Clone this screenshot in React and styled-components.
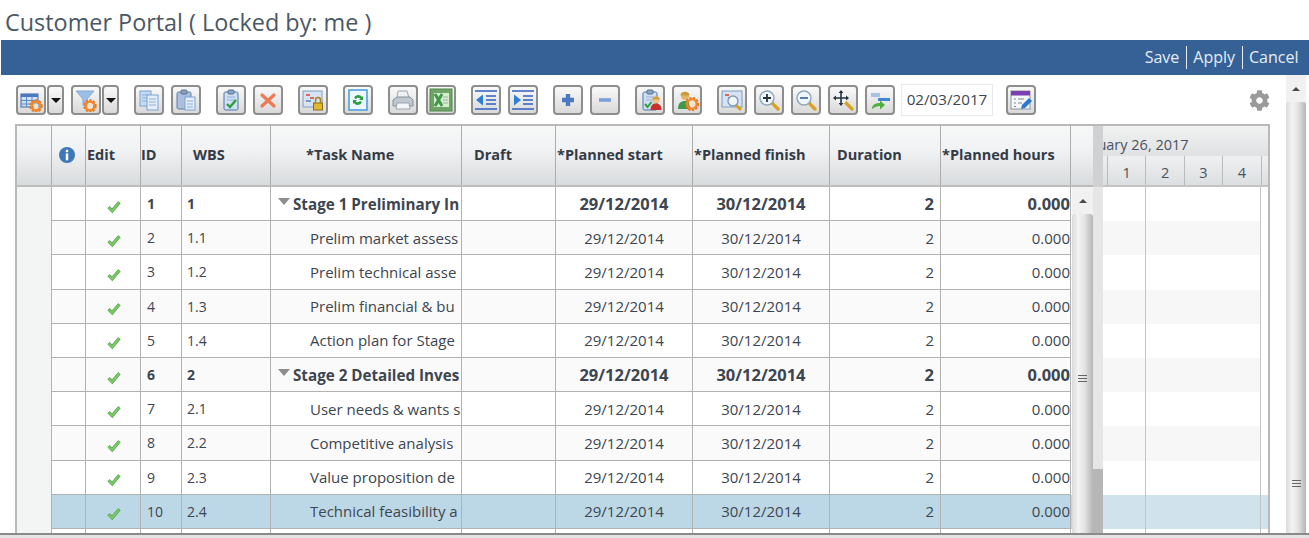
import React from "react";
import styled, { createGlobalStyle } from "styled-components";
import { FaCog } from "react-icons/fa";

const GlobalStyle = createGlobalStyle`
  html, body {
    margin: 0;
    padding: 0;
    background: #fff;
    overflow: hidden;
  }
  body {
    font-family: "Open Sans", "Noto Sans", "Liberation Sans", sans-serif;
    color: #3d4650;
  }
`;

const columns = "35px 34px 55px 41px 89px 191px 94px 137px 137px 111px 130px";

const rows = [
  { id: 1, wbs: "1", name: "Stage 1 Preliminary In", bold: true },
  { id: 2, wbs: "1.1", name: "Prelim market assess" },
  { id: 3, wbs: "1.2", name: "Prelim technical asse" },
  { id: 4, wbs: "1.3", name: "Prelim financial & bu" },
  { id: 5, wbs: "1.4", name: "Action plan for Stage" },
  { id: 6, wbs: "2", name: "Stage 2 Detailed Inves", bold: true },
  { id: 7, wbs: "2.1", name: "User needs & wants s" },
  { id: 8, wbs: "2.2", name: "Competitive analysis" },
  { id: 9, wbs: "2.3", name: "Value proposition de" },
  { id: 10, wbs: "2.4", name: "Technical feasibility a", selected: true },
];

const Svg = ({ children, size = 24 }) => (
  <svg width={size} height={size} viewBox="0 0 24 24">
    {children}
  </svg>
);

const Gear = ({ x, y, r = 5 }) => (
  <g>
    <circle cx={x} cy={y} r={r} fill="none" stroke="#e8711c" strokeWidth="3.4" strokeDasharray="2 1.2" />
    <circle cx={x} cy={y} r={r - 0.6} fill="none" stroke="#ef8a2e" strokeWidth="2.2" />
    <circle cx={x} cy={y} r={r - 2.6} fill="#f9e3c4" />
  </g>
);

const Sheet = ({ x, y, w = 11, h = 14, fill = "#dbe8f7" }) => (
  <g>
    <rect x={x} y={y} width={w} height={h} fill={fill} stroke="#7fa2cf" />
    <path d={`M${x + 2} ${y + 4}h${w - 4}M${x + 2} ${y + 7}h${w - 4}M${x + 2} ${y + 10}h${w - 4}`} stroke="#8fb0d8" />
  </g>
);

const Board = () => (
  <g>
    <rect x="5" y="4" width="14" height="18" rx="1.5" fill="#cfe0f3" stroke="#4f74a8" />
    <rect x="9" y="2" width="6" height="4" rx="1" fill="#8da6c6" stroke="#56708f" />
    <path d="M8 9h8M8 12h8" stroke="#8fb0d8" />
  </g>
);

const Lens = ({ children }) => (
  <g>
    <path d="M14 14l7 7" stroke="#d9a320" strokeWidth="3.4" strokeLinecap="round" />
    <circle cx="10" cy="10" r="7" fill="#eef5fb" stroke="#8fa5b8" strokeWidth="1.4" />
    {children}
  </g>
);

const Person = ({ x = 0, shirt = "#c8322a" }) => (
  <g transform={`translate(${x} 0)`}>
    <circle cx="16" cy="12" r="3.6" fill="#f2c28a" />
    <path d="M12 11.500c0-4 8-4 8 0z" fill="#d2a13c" />
    <path d="M10.500 22c0-5 2.500-6.500 5.500-6.500s5.500 1.500 5.500 6.500z" fill={shirt} />
  </g>
);

const icons = {
  tableGear: (
    <Svg>
      <rect x="2" y="6" width="17" height="13" fill="#cfe0f6" stroke="#3d69ab" />
      <rect x="2" y="6" width="17" height="3" fill="#4a78bd" />
      <path d="M2 12.500h17M2 16h17M7.500 9v10M13 9v10" stroke="#5f88c4" />
      <Gear x={17} y={18} />
    </Svg>
  ),
  filterGear: (
    <Svg>
      <path d="M2 3h18l-7 8v8l-4-2v-6z" fill="#9cbfe8" stroke="#86a9d6" />
      <Gear x={16} y={18} />
    </Svg>
  ),
  copy: (
    <Svg>
      <Sheet x={3} y={3} h={15} fill="#c5daf3" />
      <Sheet x={10} y={7} h={15} fill="#e3eefa" />
    </Svg>
  ),
  paste: (
    <Svg>
      <rect x="3" y="4" width="14" height="17" rx="1.500" fill="#a9c1df" stroke="#5f7da6" />
      <rect x="7" y="2" width="6" height="4" rx="1" fill="#8a9fba" stroke="#5e7694" />
      <Sheet x={11} y={9} w={10} h={13} fill="#e3eefa" />
    </Svg>
  ),
  check: (
    <Svg>
      <Board />
      <path d="M8 16l3 3 6-7" fill="none" stroke="#2f9e3f" strokeWidth="2.400" />
    </Svg>
  ),
  remove: (
    <Svg>
      <path d="M6 7l12 11M18 7L6 18" stroke="#ec7a55" strokeWidth="3.200" strokeLinecap="round" />
    </Svg>
  ),
  lock: (
    <Svg>
      <rect x="2" y="3" width="19" height="16" fill="#d5e3f3" stroke="#7f9dc2" />
      <path d="M5 7h4M9 10h4" stroke="#d8402e" strokeWidth="1.600" />
      <path d="M5 13h5" stroke="#5f88c4" strokeWidth="1.600" />
      <rect x="12.500" y="15" width="9" height="7" fill="#e0b92c" stroke="#8a6c12" />
      <path d="M14.500 15v-3a2.500 2.500 0 0 1 5 0v3" fill="none" stroke="#a8861e" strokeWidth="1.600" />
    </Svg>
  ),
  refresh: (
    <Svg>
      <rect x="3" y="2" width="18" height="20" fill="#edf6fc" stroke="#4ba3dc" strokeWidth="1.600" />
      <path d="M8 10a4.500 4.500 0 0 1 8-1l1-1v4h-4l1.400-1.200A2.800 2.800 0 0 0 10 11z" fill="#2c9d47" />
      <path d="M16 14a4.500 4.500 0 0 1-8 1l-1 1v-4h4l-1.400 1.200A2.800 2.800 0 0 0 14 13z" fill="#2c9d47" />
    </Svg>
  ),
  print: (
    <Svg>
      <path d="M7 3h9l2 7H6z" fill="#eef1f4" stroke="#9aa6b2" />
      <path d="M2 12l4-3h13l3 3v6H2z" fill="#bec6ce" stroke="#87919b" />
      <path d="M6 15h12l1 6H5z" fill="#f3f5f7" stroke="#9aa6b2" />
    </Svg>
  ),
  excel: (
    <Svg>
      <rect x="1" y="1" width="22" height="22" fill="#6ea567" stroke="#4f8a4a" />
      <rect x="5" y="5" width="15" height="14" fill="#d9ecd3" />
      <path d="M6 6l7 12M13 6L6 18" stroke="#3f9a48" strokeWidth="3" />
      <path d="M14 9h5M14 12h5M14 15h5" stroke="#8ac087" />
    </Svg>
  ),
  outdent: (
    <Svg>
      <path d="M1 3h22M1 21h22M12 8h10M12 12h10M12 16h10" stroke="#2f5fc4" strokeWidth="1.600" />
      <path d="M2 12l7-5.500v11z" fill="#2e7fd6" />
    </Svg>
  ),
  indent: (
    <Svg>
      <path d="M1 3h22M1 21h22M12 8h10M12 12h10M12 16h10" stroke="#2f5fc4" strokeWidth="1.600" />
      <path d="M10 12L3 6.500v11z" fill="#2e7fd6" />
    </Svg>
  ),
  plus: (
    <Svg>
      <path d="M12 6v12M6 12h12" stroke="#4f78c4" strokeWidth="4.400" />
    </Svg>
  ),
  minus: (
    <Svg>
      <path d="M6 12h12" stroke="#7ba0da" strokeWidth="3.600" />
    </Svg>
  ),
  assign: (
    <Svg>
      <Board />
      <path d="M7 16l2.500 3 4-5" fill="none" stroke="#2f9e3f" strokeWidth="2" />
      <Person x={2} />
    </Svg>
  ),
  resource: (
    <Svg>
      <circle cx="10" cy="8" r="4" fill="#e2b667" />
      <path d="M5.500 7.500c0-5 9-5 9 0z" fill="#c99a3a" />
      <path d="M3 21c0-6 3-8 7-8s5 2 5 8z" fill="#3d9a4a" />
      <Gear x={17} y={16} r={5.400} />
    </Svg>
  ),
  preview: (
    <Svg>
      <rect x="2" y="3" width="20" height="16" fill="#d5e3f3" stroke="#7f9dc2" />
      <path d="M5 7h4M8 10h4" stroke="#d8402e" strokeWidth="1.600" />
      <path d="M16 17l5 5" stroke="#d9a320" strokeWidth="3" />
      <circle cx="13" cy="13" r="5" fill="#eef5fb" stroke="#7f9ab6" strokeWidth="1.400" />
    </Svg>
  ),
  zoomIn: (
    <Svg>
      <Lens>
        <path d="M6 10h8M10 6v8" stroke="#29313a" strokeWidth="1.800" />
      </Lens>
    </Svg>
  ),
  zoomOut: (
    <Svg>
      <Lens>
        <path d="M6 10h8" stroke="#4f6f9c" strokeWidth="1.800" />
      </Lens>
    </Svg>
  ),
  zoomFit: (
    <Svg>
      <path d="M14 14l7 7" stroke="#d9a320" strokeWidth="3.400" strokeLinecap="round" />
      <circle cx="10" cy="10" r="6" fill="#eef5fb" />
      <path d="M3 10h14M10 3v14" stroke="#29313a" strokeWidth="1.600" />
      <path d="M10 2l-2.400 3h4.800zM10 18l-2.400-3h4.800zM2 10l3-2.400v4.800zM18 10l-3-2.400v4.800z" fill="#29313a" />
    </Svg>
  ),
  gotoBar: (
    <Svg>
      <rect x="3" y="5" width="9" height="4" fill="#a9c3e4" />
      <rect x="10" y="10" width="12" height="3" fill="#3f86d6" />
      <path d="M4 21c0-4 3-6 8-6v-2.500l5 4.500-5 4.500V18c-3 0-5 1-8 3z" fill="#4fae3c" />
    </Svg>
  ),
  calendar: (
    <Svg>
      <rect x="2" y="3" width="19" height="18" fill="#f4f6f8" stroke="#8f96a0" />
      <rect x="2" y="3" width="19" height="4.500" fill="#7a3fb0" />
      <path d="M5 11h2M9 11h6M5 15h2M9 15h4M5 18.500h2" stroke="#7c8794" strokeWidth="1.200" />
      <path d="M12 21l1-4 7-7 3 3-7 7z" fill="#2a78d0" />
    </Svg>
  ),
};

const Page = styled.div`
  width: 1309px;
  height: 538px;
  display: flex;
  flex-direction: column;
  overflow: hidden;
`;

const Title = styled.h1`
  margin: 0;
  height: 40px;
  padding-left: 5px;
  font-size: 23.4px;
  font-weight: 400;
  line-height: 44px;
  color: #4a5866;
`;

const ActionBar = styled.div`
  height: 35px;
  margin-left: 1px;
  padding-right: 4px;
  display: flex;
  justify-content: flex-end;
  align-items: center;
  background: #356197;
  box-sizing: border-box;
`;

const ActionLink = styled.a`
  font-size: 16px;
  color: #e6edf5;
  padding: 0 6.5px;
  line-height: 23px;
  border-left: 1px solid ${(p) => (p.$first ? "transparent" : "#e6edf5")};
`;

const Workspace = styled.div`
  flex: 1;
  min-height: 0;
  display: flex;
`;

const Main = styled.div`
  width: 1286px;
  box-sizing: border-box;
  padding-left: 15px;
  padding-right: 16px;
  display: flex;
  flex-direction: column;
`;

const Toolbar = styled.div`
  height: 49px;
  flex-shrink: 0;
  display: flex;
  align-items: center;
  gap: 15px;
  padding-left: 1px;
  padding-top: 1px;
  box-sizing: border-box;
`;

const Group = styled.div`
  display: flex;
  gap: ${(p) => p.$gap ?? 7}px;
  margin-left: ${(p) => p.$shift ?? 0}px;
`;

const IconButton = styled.button`
  width: 30px;
  height: 30px;
  padding: 0;
  display: flex;
  align-items: center;
  justify-content: center;
  border: 2px solid #8e8e8e;
  border-radius: 4px;
  background: linear-gradient(#f9f9f9, #d9d9d9);
  box-sizing: border-box;
`;

const Caret = styled.button`
  width: 17px;
  height: 30px;
  padding: 0;
  display: flex;
  align-items: center;
  justify-content: center;
  border: 2px solid #8e8e8e;
  border-radius: 4px;
  background: linear-gradient(#f9f9f9, #d9d9d9);
  box-sizing: border-box;

  &::after {
    content: "";
    border-left: 5px solid transparent;
    border-right: 5px solid transparent;
    border-top: 5px solid #111;
  }
`;

const DateInput = styled.div`
  width: 92px;
  height: 32px;
  margin-left: -9px;
  margin-right: -2px;
  box-sizing: border-box;
  border: 1px solid #e6e9ee;
  font-size: 15.2px;
  line-height: 28px;
  text-align: center;
  color: #3d4650;
`;

const SettingsIcon = styled(FaCog)`
  margin-left: auto;
  font-size: 21px;
  color: #9a9a9a;
`;

const Panel = styled.div`
  flex: 1;
  min-height: 0;
  display: flex;
  border: 2px solid #b9b9b9;
  border-bottom: 0;
  overflow: hidden;
`;

const TablePane = styled.div`
  width: 1076px;
  flex-shrink: 0;
  display: flex;
  flex-direction: column;
`;

const HeaderRow = styled.div`
  height: 59px;
  flex-shrink: 0;
  display: grid;
  grid-template-columns: ${columns} 1fr;
  background: linear-gradient(#f6f7f7, #f1f2f3 40%, #d8dbdd);
  border-bottom: 2px solid #bcbcbc;
`;

const HeaderCell = styled.div`
  display: flex;
  align-items: center;
  justify-content: ${(p) => p.$align ?? "flex-start"};
  padding-left: ${(p) => p.$pad ?? 0}px;
  padding-bottom: 2px;
  font-size: 14.5px;
  font-weight: 700;
  color: #333b46;
  border-right: 1px solid #adadad;
  white-space: nowrap;
  overflow: hidden;

  &:last-child {
    border-right: 0;
  }
`;

const InfoSlot = styled.span`
  display: flex;
  margin-right: 10px;
`;

const BodyArea = styled.div`
  flex: 1;
  min-height: 0;
  display: flex;
`;

const Rows = styled.div`
  width: 1055px;
  flex-shrink: 0;
  overflow: hidden;
`;

const Row = styled.div`
  height: 34.2px;
  box-sizing: border-box;
  display: grid;
  grid-template-columns: ${columns};
  font-size: ${(p) => (p.$bold ? 16.5 : 15)}px;
  font-weight: ${(p) => (p.$bold ? 700 : 400)};
  background: ${(p) => (p.$selected ? "#bcd8e6" : p.$even ? "#fafafa" : "#fff")};
`;

const Cell = styled.div`
  display: flex;
  align-items: center;
  justify-content: ${(p) => p.$align ?? "flex-start"};
  padding: 0 ${(p) => p.$right ?? 0}px 0 ${(p) => p.$left ?? 0}px;
  font-size: ${(p) => (p.$size ? `${p.$size}px` : "inherit")};
  border-right: 1px solid #b2b2b2;
  border-bottom: 1px solid #b2b2b2;
  white-space: nowrap;
  overflow: hidden;
  min-width: 0;
  box-sizing: border-box;
`;

const MarkerCell = styled.div`
  background: #f3f4f4;
  border-right: 1px solid #b2b2b2;
`;

const ExpandArrow = styled.span`
  flex-shrink: 0;
  margin-right: 3px;
  border-left: 6.5px solid transparent;
  border-right: 6.5px solid transparent;
  border-top: 7px solid #8d8d8d;
  transform: translateY(-2px);
`;

const CheckMark = styled.svg`
  transform: translateY(3px);
`;

const ScrollTrack = styled.div`
  display: flex;
  flex-direction: column;
  width: ${(p) => p.$width ?? 20}px;
  flex-shrink: 0;
  background: #f1f1f1;
`;

const ScrollArrow = styled.div`
  height: ${(p) => p.$height}px;
  flex-shrink: 0;
  display: flex;
  align-items: center;
  justify-content: center;

  &::after {
    content: "";
    border-left: 4px solid transparent;
    border-right: 4px solid transparent;
    border-bottom: 4px solid #4a4a4a;
  }
`;

const ScrollThumb = styled.div`
  flex: 1;
  display: flex;
  align-items: flex-start;
  justify-content: center;
  padding-top: ${(p) => p.$gripTop}px;
  background: linear-gradient(90deg, #d9dadb, #f3f3f3 30%, #e3e3e3 60%, #b3b5b7);
  border-radius: 3px 3px 0 0;
  box-sizing: border-box;
`;

const Grip = styled.span`
  width: 9px;
  height: 8px;
  background: repeating-linear-gradient(#666 0 1px, transparent 1px 3px);
`;

const Splitter = styled.div`
  width: 10px;
  flex-shrink: 0;
  display: flex;
  flex-direction: column;
`;

const SplitterHead = styled.div`
  height: 61px;
  background: #cfd1d2;
`;

const SplitterTrack = styled.div`
  flex: 1;
  background: #e6e6e6;
`;

const SplitterThumb = styled.div`
  height: 64px;
  background: #b6b6b6;
`;

const GanttPane = styled.div`
  flex: 1;
  min-width: 0;
  display: flex;
  flex-direction: column;
  overflow: hidden;
`;

const GanttHead = styled.div`
  height: 59px;
  flex-shrink: 0;
  display: flex;
  flex-direction: column;
  border-bottom: 2px solid #c4c4c4;
  background: #e4e6e7;
`;

const GanttMonth = styled.div`
  height: 30px;
  flex-shrink: 0;
  overflow: hidden;
  white-space: nowrap;
  text-indent: -36px;
  font-size: 14.5px;
  line-height: 38px;
  color: #4a5360;
  background: linear-gradient(#f1f2f2, #dfe1e3);
`;

const GanttDays = styled.div`
  flex: 1;
  display: grid;
  grid-template-columns: 5px repeat(4, 38.4px) 1fr;
  background: linear-gradient(#eff0f1, #dcdfe1);
`;

const GanttDay = styled.div`
  display: flex;
  align-items: center;
  justify-content: center;
  padding-top: 3px;
  font-size: 14.5px;
  color: #4a5360;
  border-right: 1px solid #b9bcbf;

  &:last-child {
    border-right: 0;
  }
`;

const GanttBody = styled.div`
  flex: 1;
  min-height: 0;
  overflow: hidden;
`;

const GanttRow = styled.div`
  height: 34.2px;
  display: grid;
  grid-template-columns: 43px 115px;
  background: ${(p) => (p.$selected ? "#d0e2ec" : "#fff")};
`;

const GanttCell = styled.div`
  background: ${(p) => (p.$even ? "#f7f7f7" : "transparent")};
  border-right: 1px solid #c4c4c4;
`;

const Gutter = styled.div`
  flex: 1;
  background: #fff;
`;

const Footer = styled.div`
  height: 5px;
  flex-shrink: 0;
  background: #e4e4e4;
  border-top: 2px solid #8a8a8a;
  box-sizing: border-box;
`;

const Check = () => (
  <CheckMark width="14" height="14" viewBox="0 0 17 16">
    <path d="M1 9.500l2.500-2 2.500 3L13.500 1.500 16 3.500 6.500 15z" fill="#7ccb66" stroke="#4a9f44" strokeWidth="1" />
  </CheckMark>
);

const InfoIcon = () => (
  <svg width="16" height="16" viewBox="0 0 16 16">
    <circle cx="8" cy="8" r="8" fill="#3f78b8" />
    <rect x="6.800" y="2.800" width="2.400" height="2.400" fill="#fff" />
    <rect x="6.800" y="6.500" width="2.400" height="6.800" fill="#fff" />
  </svg>
);

const Btn = ({ icon }) => <IconButton>{icons[icon]}</IconButton>;

export default function App() {
  return (
    <Page>
      <GlobalStyle />
      <Title>Customer Portal ( Locked by: me )</Title>
      <ActionBar>
        <ActionLink $first>Save</ActionLink>
        <ActionLink>Apply</ActionLink>
        <ActionLink>Cancel</ActionLink>
      </ActionBar>
      <Workspace>
        <Main>
          <Toolbar>
            <Group $gap={1}>
              <Btn icon="tableGear" />
              <Caret />
            </Group>
            <Group $gap={1} $shift={-8}>
              <Btn icon="filterGear" />
              <Caret />
            </Group>
            <Group>
              <Btn icon="copy" />
              <Btn icon="paste" />
            </Group>
            <Group>
              <Btn icon="check" />
              <Btn icon="remove" />
            </Group>
            <Btn icon="lock" />
            <Btn icon="refresh" />
            <Group $gap={8}>
              <Btn icon="print" />
              <Btn icon="excel" />
            </Group>
            <Group>
              <Btn icon="outdent" />
              <Btn icon="indent" />
            </Group>
            <Group>
              <Btn icon="plus" />
              <Btn icon="minus" />
            </Group>
            <Group>
              <Btn icon="assign" />
              <Btn icon="resource" />
            </Group>
            <Group>
              <Btn icon="preview" />
              <Btn icon="zoomIn" />
              <Btn icon="zoomOut" />
              <Btn icon="zoomFit" />
              <Btn icon="gotoBar" />
            </Group>
            <DateInput>02/03/2017</DateInput>
            <Btn icon="calendar" />
            <SettingsIcon />
          </Toolbar>
          <Panel>
            <TablePane>
              <HeaderRow>
                <HeaderCell />
                <HeaderCell $align="flex-end">
                  <InfoSlot>
                    <InfoIcon />
                  </InfoSlot>
                </HeaderCell>
                <HeaderCell $pad={1}>Edit</HeaderCell>
                <HeaderCell>ID</HeaderCell>
                <HeaderCell $pad={11}>WBS</HeaderCell>
                <HeaderCell $pad={35}>*Task Name</HeaderCell>
                <HeaderCell $pad={12}>Draft</HeaderCell>
                <HeaderCell $pad={1}>*Planned start</HeaderCell>
                <HeaderCell $pad={1}>*Planned finish</HeaderCell>
                <HeaderCell $pad={7}>Duration</HeaderCell>
                <HeaderCell $pad={1}>*Planned hours</HeaderCell>
                <HeaderCell />
              </HeaderRow>
              <BodyArea>
                <Rows>
                  {rows.map((row) => (
                    <Row key={row.id} $bold={row.bold} $even={row.id % 2 === 0} $selected={row.selected}>
                      <MarkerCell />
                      <Cell />
                      <Cell $align="center" $left={1}>
                        <Check />
                      </Cell>
                      <Cell $left={6} $size={14}>{row.id}</Cell>
                      <Cell $left={5} $size={14}>{row.wbs}</Cell>
                      {row.bold ? (
                        <Cell $left={7} $size={15.2}>
                          <ExpandArrow />
                          {row.name}
                        </Cell>
                      ) : (
                        <Cell $left={39}>{row.name}</Cell>
                      )}
                      <Cell />
                      <Cell $align="center">29/12/2014</Cell>
                      <Cell $align="center">30/12/2014</Cell>
                      <Cell $align="flex-end" $right={6}>2</Cell>
                      <Cell $align="flex-end">0.000</Cell>
                    </Row>
                  ))}
                  <Row>
                    <MarkerCell />
                    <Cell />
                    <Cell />
                    <Cell />
                    <Cell />
                    <Cell />
                    <Cell />
                    <Cell />
                    <Cell />
                    <Cell />
                    <Cell />
                  </Row>
                </Rows>
                <ScrollTrack $width={21}>
                  <ScrollArrow $height={27} />
                  <ScrollThumb $gripTop={161}>
                    <Grip />
                  </ScrollThumb>
                </ScrollTrack>
              </BodyArea>
            </TablePane>
            <Splitter>
              <SplitterHead />
              <SplitterTrack />
              <SplitterThumb />
            </Splitter>
            <GanttPane>
              <GanttHead>
                <GanttMonth>February 26, 2017</GanttMonth>
                <GanttDays>
                  <GanttDay />
                  <GanttDay>1</GanttDay>
                  <GanttDay>2</GanttDay>
                  <GanttDay>3</GanttDay>
                  <GanttDay>4</GanttDay>
                  <GanttDay />
                </GanttDays>
              </GanttHead>
              <GanttBody>
                {rows.map((row) => (
                  <GanttRow key={row.id} $selected={row.selected}>
                    <GanttCell $even={row.id % 2 === 0 && !row.selected} />
                    <GanttCell $even={row.id % 2 === 0 && !row.selected} />
                  </GanttRow>
                ))}
                <GanttRow>
                  <GanttCell />
                  <GanttCell />
                </GanttRow>
              </GanttBody>
            </GanttPane>
          </Panel>
        </Main>
        <ScrollTrack $width={20}>
          <ScrollArrow $height={27} />
          <ScrollThumb $gripTop={378}>
            <Grip />
          </ScrollThumb>
        </ScrollTrack>
        <Gutter />
      </Workspace>
      <Footer />
    </Page>
  );
}
